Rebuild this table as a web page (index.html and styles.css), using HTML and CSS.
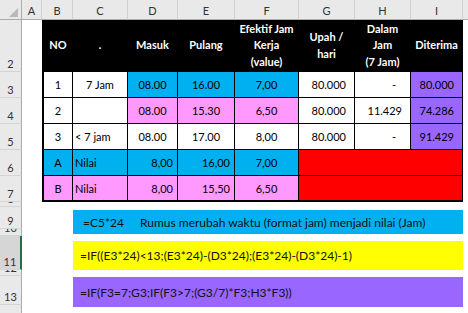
FILE: index.html
```html
<!DOCTYPE html>
<html>
<head>
<meta charset="utf-8">
<link rel="stylesheet" href="styles.css">
</head>
<body>
<div class="sheet">
  <div class="corner"><svg width="22" height="20" viewBox="0 0 22 20"><polygon points="18,8 18,17 9,17" fill="#b9b9b9"/></svg></div>
  <div class="ch">A</div><div class="ch">B</div><div class="ch">C</div><div class="ch">D</div><div class="ch">E</div><div class="ch">F</div><div class="ch">G</div><div class="ch">H</div><div class="ch">I</div><div class="ch last"></div>

  <div class="rh">2</div><div class="c"></div>
  <div class="t hd first">NO</div><div class="t hd">.</div><div class="t hd">Masuk</div><div class="t hd">Pulang</div><div class="t hd">Efektif Jam<br>Kerja<br>(value)</div><div class="t hd">Upah /<br>hari</div><div class="t hd">Dalam<br>Jam<br>(7 Jam)</div><div class="t hd">Diterima</div>
  <div class="c"></div>

  <div class="rh">3</div><div class="c"></div>
  <div class="t first ctr">1</div><div class="t ctr">7 Jam</div><div class="t ctr blue">08.00</div><div class="t ctr blue">16.00</div><div class="t ctr blue">7,00</div><div class="t acc">80.000</div><div class="t acc dash">-</div><div class="t acc purple">80.000</div>
  <div class="c"></div>

  <div class="rh">4</div><div class="c"></div>
  <div class="t first ctr">2</div><div class="t"></div><div class="t ctr pink">08.00</div><div class="t ctr pink">15.30</div><div class="t ctr pink">6,50</div><div class="t acc">80.000</div><div class="t acc">11.429</div><div class="t acc purple">74.286</div>
  <div class="c"></div>

  <div class="rh">5</div><div class="c"></div>
  <div class="t first ctr">3</div><div class="t lft">&lt; 7 jam</div><div class="t ctr">08.00</div><div class="t ctr">17.00</div><div class="t ctr">8,00</div><div class="t acc">80.000</div><div class="t acc dash">-</div><div class="t acc purple">91.429</div>
  <div class="c"></div>

  <div class="rh">6</div><div class="c"></div>
  <div class="t first ctr blue">A</div><div class="t lft blue">Nilai</div><div class="t rgt blue">8,00</div><div class="t rgt blue">16,00</div><div class="t ctr blue">7,00</div><div class="t red span3"></div>
  <div class="c"></div>

  <div class="rh">7</div><div class="c"></div>
  <div class="t first ctr pink bot">B</div><div class="t lft pink bot">Nilai</div><div class="t rgt pink bot">8,00</div><div class="t rgt pink bot">15,50</div><div class="t ctr pink bot">6,50</div><div class="t red span3 bot"></div>
  <div class="c"></div>

  <div class="rh r8">8</div>
  <div class="rh r9">9</div>
  <div class="rh r10">10</div>
  <div class="rh r11 sel">11</div>
  <div class="rh r12">12</div>
  <div class="rh r13">13</div>
  <div class="rh r14">14</div>

  <div class="box b9"><span class="code">=C5*24</span><span>Rumus merubah waktu (format jam) menjadi nilai (Jam)</span></div>
  <div class="box b11"><span>=IF((E3*24)&lt;13;(E3*24)-(D3*24);(E3*24)-(D3*24)-1)</span></div>
  <div class="box b13"><span>=IF(F3=7;G3;IF(F3&gt;7;(G3/7)*F3;H3*F3))</span></div>
</div>
</body>
</html>
```

FILE: styles.css
```css
html, body {
  margin: 0;
  padding: 0;
  background: #ffffff;
  overflow: hidden;
}

.sheet {
  width: 468px;
  height: 313px;
  overflow: hidden;
  display: grid;
  grid-template-columns: 22px 20px 31px 55px 50px 57px 64px 56px 56px 52px 1fr;
  grid-template-rows: 20px 52px 26px 26px 26px 26px 26px 5px 22px 7px 34px 6px 29px 30px;
  font-family: Lato, "Liberation Sans", sans-serif;
  font-size: 11px;
  color: #000;
}

.corner {
  background: #e9e9e9;
  border-right: 1px solid #ababab;
  border-bottom: 1px solid #ababab;
  box-sizing: border-box;
}
.corner svg { display: block; }

.ch {
  background: #e9e9e9;
  border-right: 1px solid #d0d0d0;
  border-bottom: 1px solid #ababab;
  box-sizing: border-box;
  display: flex;
  align-items: center;
  justify-content: center;
  padding-top: 2px;
  color: #333;
  font-size: 11px;
}
.ch.last { border-right: none; }

.rh {
  grid-column: 1;
  background: #e9e9e9;
  border-right: 1px solid #ababab;
  border-bottom: 1px solid #d4d4d4;
  box-sizing: border-box;
  display: flex;
  align-items: flex-end;
  justify-content: center;
  overflow: hidden;
  line-height: 13px;
  padding-bottom: 1px;
  color: #333;
  font-size: 11px;
}
.rh.sel {
  background: #d6d6d6;
  border-right: 2px solid #217346;
}
.r8 { grid-row: 8; }
.r9 { grid-row: 9; }
.r10 { grid-row: 10; }
.r11 { grid-row: 11; }
.r12 { grid-row: 12; }
.r13 { grid-row: 13; }
.r14 { grid-row: 14; }

.c { background: #fff; }

.t {
  box-sizing: border-box;
  border-right: 1px solid #000;
  border-bottom: 1px solid #000;
  display: flex;
  align-items: center;
  background: #fff;
  white-space: nowrap;
}
.t.first { border-left: 2px solid #000; }
.t.bot { border-bottom: 2px solid #000; }

.hd {
  background: #000;
  color: #fff;
  font-weight: bold;
  justify-content: center;
  text-align: center;
  line-height: 16.5px;
}

.ctr { justify-content: center; }
.lft { justify-content: flex-start; padding-left: 2px; }
.rgt { justify-content: flex-end; padding-right: 4px; }
.acc { justify-content: flex-end; padding-right: 8px; }
.acc.dash { padding-right: 14px; }

.blue { background: #00b0f0; }
.pink { background: #ff99ff; }
.purple { background: #9966ff; }
.red { background: #ff0000; }
.span3 { grid-column: span 3; }

.box {
  grid-column: 4 / 11;
  display: flex;
  align-items: center;
  font-size: 12px;
  color: #111;
  white-space: nowrap;
  padding-left: 7px;
  box-sizing: border-box;
}
.b9 {
  grid-row: 9 / 11;
  margin-top: 3px;
  height: 24px;
  background: #00b0f0;
  padding-left: 10px;
}
.b9 .code { margin-right: 16px; }
.b11 {
  grid-row: 11;
  margin-top: 5px;
  height: 29px;
  background: #ffff00;
}
.b13 {
  grid-row: 13 / 15;
  margin-top: 1px;
  height: 30px;
  background: #9966ff;
}
```
